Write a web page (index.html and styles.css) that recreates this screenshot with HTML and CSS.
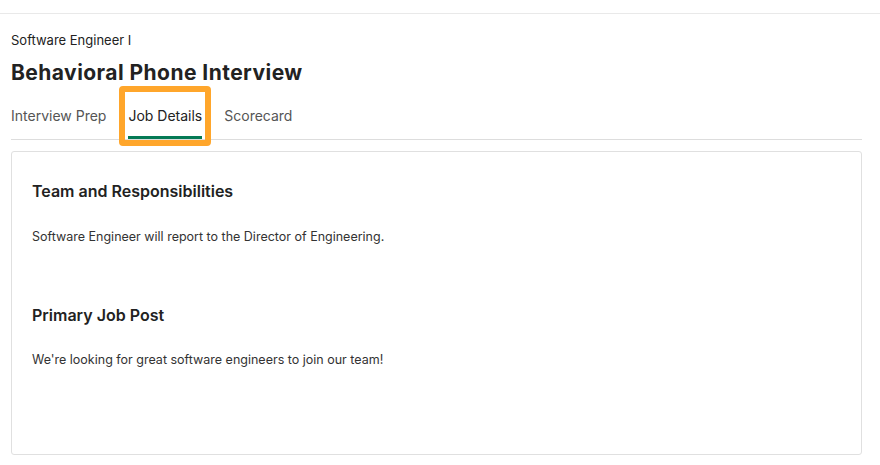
FILE: index.html
```html
<!DOCTYPE html>
<html lang="en">
<head>
<meta charset="utf-8">
<title>Behavioral Phone Interview</title>
<link rel="stylesheet" href="styles.css">
</head>
<body>
<div class="topbar"></div>
<main class="page">
  <div class="subtitle">Software Engineer I</div>
  <h1 class="title">Behavioral Phone Interview</h1>
  <nav class="tabs">
    <a class="tab">Interview Prep</a>
    <a class="tab active">Job Details<span class="highlight"></span></a>
    <a class="tab">Scorecard</a>
  </nav>
  <section class="card">
    <h2 class="card-heading">Team and Responsibilities</h2>
    <p class="card-text">Software Engineer will report to the Director of Engineering.</p>
    <h2 class="card-heading second">Primary Job Post</h2>
    <p class="card-text last">We're looking for great software engineers to join our team!</p>
  </section>
</main>
</body>
</html>
```

FILE: styles.css
```css
* { box-sizing: border-box; }
html, body { margin: 0; padding: 0; background: #ffffff; }
body {
  font-family: Inter, "Noto Sans", "Liberation Sans", sans-serif;
  color: #222222;
  width: 880px;
  height: 465px;
  overflow: hidden;
}
.topbar {
  height: 14px;
  border-bottom: 1px solid #e9e9e9;
}
.page {
  padding: 0 18px 0 11px;
}
.subtitle {
  margin-top: 17px;
  font-size: 13px;
  line-height: 18px;
  color: #222222;
}
.title {
  margin: 11px 0 0 0;
  font-size: 21px;
  line-height: 26px;
  font-weight: 700;
  letter-spacing: 0.45px;
  color: #222222;
}
.tabs {
  margin-top: 20px;
  display: flex;
  gap: 22px;
  border-bottom: 1px solid #dddddd;
}
.tab {
  position: relative;
  font-size: 14px;
  line-height: 20px;
  color: #555555;
  padding-bottom: 13px;
  cursor: pointer;
}
.tab.active {
  color: #222222;
  padding-bottom: 10px;
  border-bottom: 3px solid #047a55;
}
.highlight {
  position: absolute;
  left: -9px;
  top: -20px;
  width: 92px;
  height: 60px;
  border: 6px solid #ffa62b;
  border-radius: 4px;
  pointer-events: none;
}
.card {
  margin-top: 11px;
  height: 304px;
  border: 1px solid #e0e0e0;
  border-radius: 3px;
  padding: 28px 20px 0 20px;
}
.card-heading {
  margin: 0;
  font-size: 16px;
  line-height: 22px;
  font-weight: 600;
  color: #222222;
}
.card-heading.second { margin-top: 58px; }
.card-text {
  margin: 26px 0 0 0;
  font-size: 12.5px;
  line-height: 18px;
  color: #333333;
}
.card-text.last { margin-top: 25px; }
```
